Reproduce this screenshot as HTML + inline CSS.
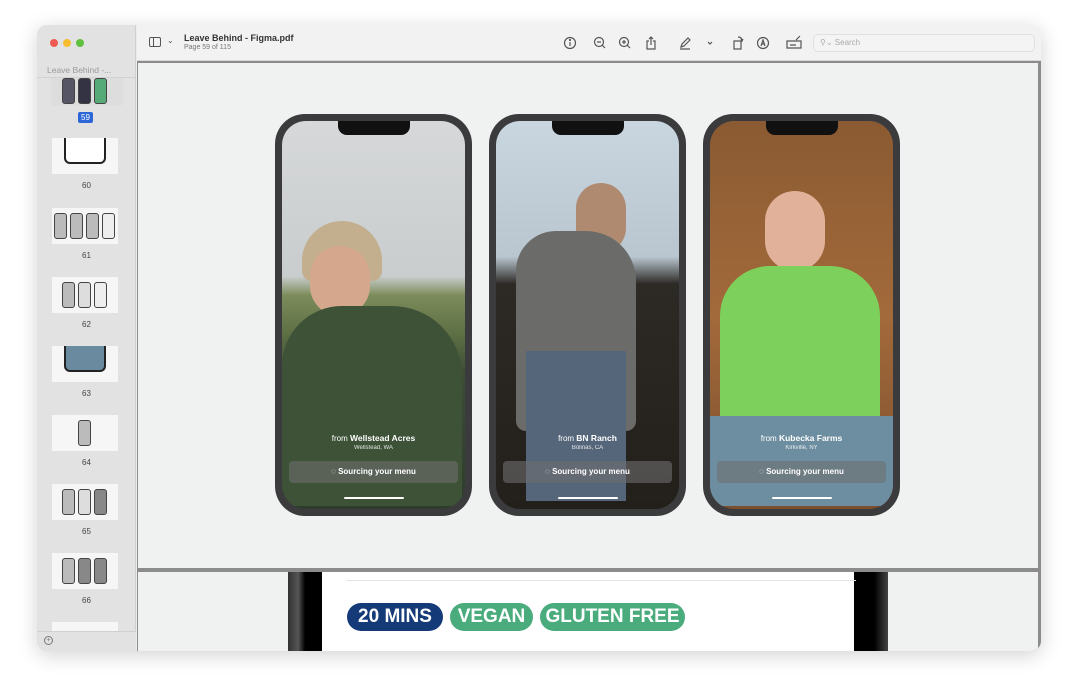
<!DOCTYPE html>
<html><head><style>
*{margin:0;padding:0;box-sizing:border-box}
body{width:1078px;height:700px;background:#fff;font-family:"Liberation Sans",sans-serif;position:relative;overflow:hidden}
.win{position:absolute;left:37px;top:25px;width:1004px;height:626px;border-radius:10px;overflow:hidden;background:#ececec;box-shadow:0 4px 20px rgba(0,0,0,.18)}
.side{position:absolute;left:0;top:0;width:99px;height:626px;background:#e2e2e2;border-right:1px solid #cfcfcf}
.dot{position:absolute;top:14px;width:8px;height:8px;border-radius:50%}
.tool{position:absolute;left:100px;top:0;right:0;height:36px;background:#f2f2f2;border-bottom:1px solid #d8d8d8}
.content{position:absolute;left:100px;top:36px;right:0;bottom:0;background:#8c8c8c}
.page1{position:absolute;left:1px;top:2px;width:900px;height:505px;background:#f0f1f1}
.page2{position:absolute;left:1px;top:511px;width:900px;height:80px;background:#f0f1f1}
.phone{position:absolute;top:51px;width:197px;height:402px;border-radius:30px;background:#3b3b3d;padding:7px}
.scr{position:relative;width:100%;height:100%;border-radius:24px;overflow:hidden}
.notch{position:absolute;left:50%;margin-left:-36px;top:0;width:72px;height:14px;background:#111;border-radius:0 0 9px 9px}
.cap{position:absolute;left:0;right:0;top:312px;text-align:center;color:#fff;font-size:8px}
.cap b{font-size:8.5px}
.cap small{display:block;font-size:6px;margin-top:2px;opacity:.85}
.btn{position:absolute;left:7px;right:7px;top:340px;height:22px;border-radius:4px;background:rgba(110,110,110,.6);color:#fff;font-size:8px;font-weight:bold;text-align:center;line-height:22px}
.bar{position:absolute;left:50%;margin-left:-30px;top:376px;width:60px;height:2px;background:#fff;border-radius:1px}
.th{position:absolute;left:15px;width:66px;height:36px;background:#f6f6f6}
.lbl{position:absolute;left:0;width:99px;text-align:center;font-size:8px;color:#444}
.mini{position:absolute;top:5px;width:13px;height:26px;border:1.5px solid #444;border-radius:3px;background:#bbb}
.pill{position:absolute;top:31px;height:28px;border-radius:14px;color:#fff;font-weight:bold;font-size:19px;line-height:28px;text-align:center}
</style></head><body>
<div class="win">
 <div class="side">
  <div class="dot" style="left:13px;background:#ee5a52"></div>
  <div class="dot" style="left:26px;background:#f5bd2f"></div>
  <div class="dot" style="left:39px;background:#5fc13f"></div>
  <div style="position:absolute;left:10px;top:40px;font-size:8.5px;color:#999">Leave Behind -...</div>
  <div style="position:absolute;left:0;top:52px;width:99px;border-top:1px solid #d2d2d2"></div>
  <div class="th" style="top:53px;height:28px;left:14px;width:72px;background:#ddd;border-radius:0 0 4px 4px"><div class="mini" style="left:11px;top:0;background:#556"></div><div class="mini" style="left:27px;top:0;background:#334"></div><div class="mini" style="left:43px;top:0;background:#5a7"></div></div>
  <div style="position:absolute;left:41px;top:87px;width:15px;height:11px;background:#2d66d6;color:#fff;font-size:8px;text-align:center;line-height:11px;border-radius:2px">59</div>
  <div class="th" style="top:113px"><div style="position:absolute;left:12px;top:0;width:42px;height:26px;border:2px solid #222;border-top:none;border-radius:0 0 6px 6px;background:#fff"></div></div><div class="lbl" style="top:156px">60</div>
  <div class="th" style="top:183px"><div class="mini" style="left:2px"></div><div class="mini" style="left:18px"></div><div class="mini" style="left:34px"></div><div class="mini" style="left:50px;background:#eee"></div></div><div class="lbl" style="top:226px">61</div>
  <div class="th" style="top:252px"><div class="mini" style="left:10px"></div><div class="mini" style="left:26px;background:#ddd"></div><div class="mini" style="left:42px;background:#eee"></div></div><div class="lbl" style="top:295px">62</div>
  <div class="th" style="top:321px"><div style="position:absolute;left:12px;top:0;width:42px;height:26px;border:2px solid #222;border-top:none;border-radius:0 0 6px 6px;background:#6a8aa0"></div></div><div class="lbl" style="top:364px">63</div>
  <div class="th" style="top:390px"><div class="mini" style="left:26px"></div></div><div class="lbl" style="top:433px">64</div>
  <div class="th" style="top:459px"><div class="mini" style="left:10px"></div><div class="mini" style="left:26px;background:#ddd"></div><div class="mini" style="left:42px;background:#888"></div></div><div class="lbl" style="top:502px">65</div>
  <div class="th" style="top:528px"><div class="mini" style="left:10px"></div><div class="mini" style="left:26px;background:#888"></div><div class="mini" style="left:42px;background:#888"></div></div><div class="lbl" style="top:571px">66</div>
  <div class="th" style="top:597px;height:10px"></div>
  <div style="position:absolute;left:0;top:606px;width:99px;height:20px;background:#e2e2e2;border-top:1px solid #d0d0d0"></div>
  <div style="position:absolute;left:7px;top:611px;width:9px;height:9px;border:1px solid #777;border-radius:50%;font-size:7px;line-height:7px;text-align:center;color:#777">+</div>
 </div>
 <div class="tool">
  <div style="position:absolute;left:12px;top:12px;width:12px;height:10px;border:1.3px solid #555;border-radius:2px"><div style="position:absolute;left:3px;top:0;width:1px;height:8px;background:#555"></div></div>
  <div style="position:absolute;left:30px;top:11px;font-size:8px;color:#555">⌄</div>
  <div style="position:absolute;left:47px;top:8px;font-size:9px;font-weight:bold;color:#333">Leave Behind - Figma.pdf</div>
  <div style="position:absolute;left:47px;top:19px;font-size:7px;color:#777">Page 59 of 115</div>
  <svg style="position:absolute;left:426px;top:10px" width="240" height="16" fill="none" stroke="#555" stroke-width="1.2">
   <circle cx="7" cy="8" r="5.5"/><line x1="7" y1="7" x2="7" y2="11"/><circle cx="7" cy="5" r=".5"/>
   <circle cx="36" cy="7" r="4.5"/><line x1="39" y1="10" x2="42" y2="13"/><line x1="34" y1="7" x2="38" y2="7"/>
   <circle cx="61" cy="7" r="4.5"/><line x1="64" y1="10" x2="67" y2="13"/><line x1="59" y1="7" x2="63" y2="7"/><line x1="61" y1="5" x2="61" y2="9"/>
   <path d="M86 6h-2v8h8v-8h-2M88 10V2M86 4l2-2 2 2"/>
   <path d="M118 12l1-3 6-6 2 2-6 6zM117 14h10"/>
   <path d="M145 7l2 2 2-2" />
   <path d="M171 6h7v8h-7zM175 2q4 0 4 4M178 4l1 2 1-2"/>
   <circle cx="200" cy="8" r="5.5"/><path d="M198 11l2-6 2 6M199 9h2"/>
   <path d="M224 6h14v7h-14zM227 10h6M233 5l4-4"/>
  </svg>
  <div style="position:absolute;left:676px;top:9px;width:222px;height:18px;border:1px solid #e0e0e0;border-radius:5px;background:#f4f4f4;font-size:8px;color:#aaa;line-height:16px;padding-left:6px">⚲⌄ Search</div>
 </div>
 <div class="content">
  <div class="page1">
   <div class="phone" style="left:137px">
    <div class="scr" style="background:linear-gradient(180deg,#d6d8d9 0%,#c9cdcd 40%,#7c8b5a 45%,#5d6f44 55%,#3d4d36 65%,#2e3c2c 100%)">
     <div style="position:absolute;left:20px;top:100px;width:80px;height:60px;border-radius:40px 40px 10px 10px;background:#c3ae8e"></div>
     <div style="position:absolute;left:28px;top:125px;width:60px;height:70px;border-radius:30px;background:#d5a88e"></div>
     <div style="position:absolute;left:0;top:185px;width:180px;height:200px;border-radius:60px 70px 0 0;background:#3d5237"></div>
     <div class="notch"></div>
     <div class="cap">from <b>Wellstead Acres</b><small>Wellstead, WA</small></div>
     <div class="btn">◌ Sourcing your menu</div><div class="bar"></div>
    </div>
   </div>
   <div class="phone" style="left:351px">
    <div class="scr" style="background:linear-gradient(180deg,#c9d6e0 0%,#b9c6cf 35%,#2d2a26 42%,#231f1b 100%)">
     <div style="position:absolute;left:80px;top:62px;width:50px;height:70px;border-radius:25px;background:#b08a70"></div>
     <div style="position:absolute;left:20px;top:110px;width:120px;height:200px;border-radius:40px 50px 10px 10px;background:#6b6c6a"></div>
     <div style="position:absolute;left:30px;top:230px;width:100px;height:150px;background:#55657a"></div>
     <div class="notch"></div>
     <div class="cap">from <b>BN Ranch</b><small>Bolinas, CA</small></div>
     <div class="btn">◌ Sourcing your menu</div><div class="bar"></div>
    </div>
   </div>
   <div class="phone" style="left:565px">
    <div class="scr" style="background:linear-gradient(180deg,#8a5a32 0%,#a36a3b 50%,#7c4f2d 100%)">
     <div style="position:absolute;left:55px;top:70px;width:60px;height:80px;border-radius:30px;background:#e2b199"></div>
     <div style="position:absolute;left:10px;top:145px;width:160px;height:160px;border-radius:50px 50px 0 0;background:#7ed05c"></div>
     <div style="position:absolute;left:0;top:295px;width:183px;height:90px;background:#6d8ea0"></div>
     <div class="notch"></div>
     <div class="cap">from <b>Kubecka Farms</b><small>Kirkville, NY</small></div>
     <div class="btn">◌ Sourcing your menu</div><div class="bar"></div>
    </div>
   </div>
  </div>
  <div class="page2">
   <div style="position:absolute;left:150px;top:0;width:34px;height:80px;background:linear-gradient(90deg,#333 0,#555 30%,#000 50%,#000 100%)"></div>
   <div style="position:absolute;left:184px;top:0;width:533px;height:80px;background:#fff"></div>
   <div style="position:absolute;left:716px;top:0;width:34px;height:80px;background:linear-gradient(90deg,#000 0,#000 60%,#444 100%)"></div>
   <div style="position:absolute;left:208px;top:8px;width:510px;height:1px;background:#e4e4e4"></div>
   <div class="pill" style="left:209px;width:96px;background:#143a78">20 MINS</div>
   <div class="pill" style="left:312px;width:83px;background:#4aab7d">VEGAN</div>
   <div class="pill" style="left:402px;width:145px;background:#4aab7d">GLUTEN FREE</div>
  </div>
 </div>
</div>
</body></html>
